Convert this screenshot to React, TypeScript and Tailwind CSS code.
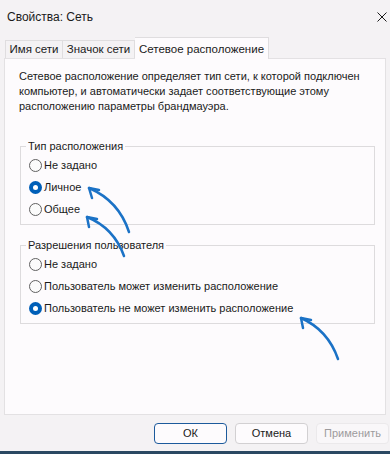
import React from "react";

function Radio({ checked }: { checked?: boolean }) {
  if (checked) {
    return (
      <span className="flex h-[13px] w-[13px] shrink-0 items-center justify-center rounded-full bg-[#005fb8]">
        <span className="h-[5px] w-[5px] rounded-full bg-white" />
      </span>
    );
  }
  return <span className="h-[13px] w-[13px] shrink-0 rounded-full border border-[#616161] bg-[#fbfbfb]" />;
}

function Option({ label, checked }: { label: string; checked?: boolean }) {
  return (
    <div className="flex h-[22px] items-center gap-[2px] pl-[8px]">
      <Radio checked={checked} />
      <span>{label}</span>
    </div>
  );
}

function Group({ title, options }: { title: string; options: { label: string; checked?: boolean }[] }) {
  return (
    <fieldset className="ml-[1px] mr-[10px] border border-[#dddbdd] pb-[4px]">
      <legend className="ml-[5px] px-[2px] leading-[16px]">{title}</legend>
      {options.map((o) => (
        <Option key={o.label} label={o.label} checked={o.checked} />
      ))}
    </fieldset>
  );
}

function Arrow({ d, head }: { d: string; head: string }) {
  return (
    <g fill="none" stroke="#1b72c6" strokeWidth="2.5" strokeLinecap="round" strokeLinejoin="round">
      <path d={d} />
      <path d={head} />
    </g>
  );
}

export default function App() {
  return (
    <div
      className="relative flex h-[454px] w-[390px] flex-col overflow-hidden bg-[#f4f2f4] text-[11px] text-[#1a1a1a]"
      style={{ fontFamily: '"Liberation Sans", Arial, sans-serif' }}
    >
      <div className="flex h-[32px] items-center justify-between pl-[7px] pr-[3px] pt-[1px] text-[12px]">
        <span>Свойства: Сеть</span>
        <svg width="10" height="10" viewBox="0 0 10 10">
          <path d="M0.5 0.5 L9.5 9.5 M9.5 0.5 L0.5 9.5" stroke="#1a1a1a" strokeWidth="1" />
        </svg>
      </div>

      <div className="mt-[5px] flex h-[21px] items-end pl-[5px] text-[12px]">
        <div className="flex h-[18px] w-[58px] items-center justify-center border border-b-0 border-[#dfdddf] bg-[#f4f2f4] text-[11.5px]">
          Имя сети
        </div>
        <div className="flex h-[18px] w-[72px] items-center justify-center border border-b-0 border-l-0 border-[#dfdddf] bg-[#f4f2f4] text-[11.5px]">
          Значок сети
        </div>
        <div className="relative z-10 -mb-px flex h-[22px] w-[134px] items-start justify-center border border-b-0 border-l-0 border-[#dfdddf] bg-[#fdfbfd] pt-[3px] text-[11.5px]">
          Сетевое расположение
        </div>
      </div>

      <div className="mx-[4px] h-[357px] border border-[#e3e1e3] bg-[#fdfbfd] pl-[14px] pt-[10px]">
        <p className="leading-[15px]">
          Сетевое расположение определяет тип сети, к которой подключен
          <br />
          компьютер, и автоматически задает соответствующие этому
          <br />
          расположению параметры брандмауэра.
        </p>

        <div className="mt-[24px] flex flex-col gap-[12px]">
          <Group
            title="Тип расположения"
            options={[{ label: "Не задано" }, { label: "Личное", checked: true }, { label: "Общее" }]}
          />
          <Group
            title="Разрешения пользователя"
            options={[
              { label: "Не задано" },
              { label: "Пользователь может изменить расположение" },
              { label: "Пользователь не может изменить расположение", checked: true },
            ]}
          />
        </div>
      </div>

      <div className="mt-[8px] flex justify-end gap-[8px] pr-[1px]">
        <button className="h-[21px] w-[73px] rounded-[4px] border-[1.5px] border-[#1c5a9c] bg-[#fdfbfd]">ОК</button>
        <button className="h-[21px] w-[73px] rounded-[4px] border border-[#d2d0d2] bg-[#fdfbfd]">Отмена</button>
        <button className="h-[21px] w-[73px] rounded-[4px] border border-[#ebe9eb] bg-[#f9f7f9] text-[#9d9b9d]">
          Применить
        </button>
      </div>

      <div className="mt-auto h-[3px] bg-[#2a4862]" />

      <svg className="pointer-events-none absolute inset-0" width="390" height="454" viewBox="0 0 390 454">
        <Arrow d="M129 232 Q119 201 89 188" head="M99 190 L89 188 L92 198" />
        <Arrow d="M124 256 Q114 228 87 217" head="M97 219 L87 217 L89 227" />
        <Arrow d="M338 359 Q328 330 301 318" head="M311 320 L301 318 L303 328" />
      </svg>
    </div>
  );
}
